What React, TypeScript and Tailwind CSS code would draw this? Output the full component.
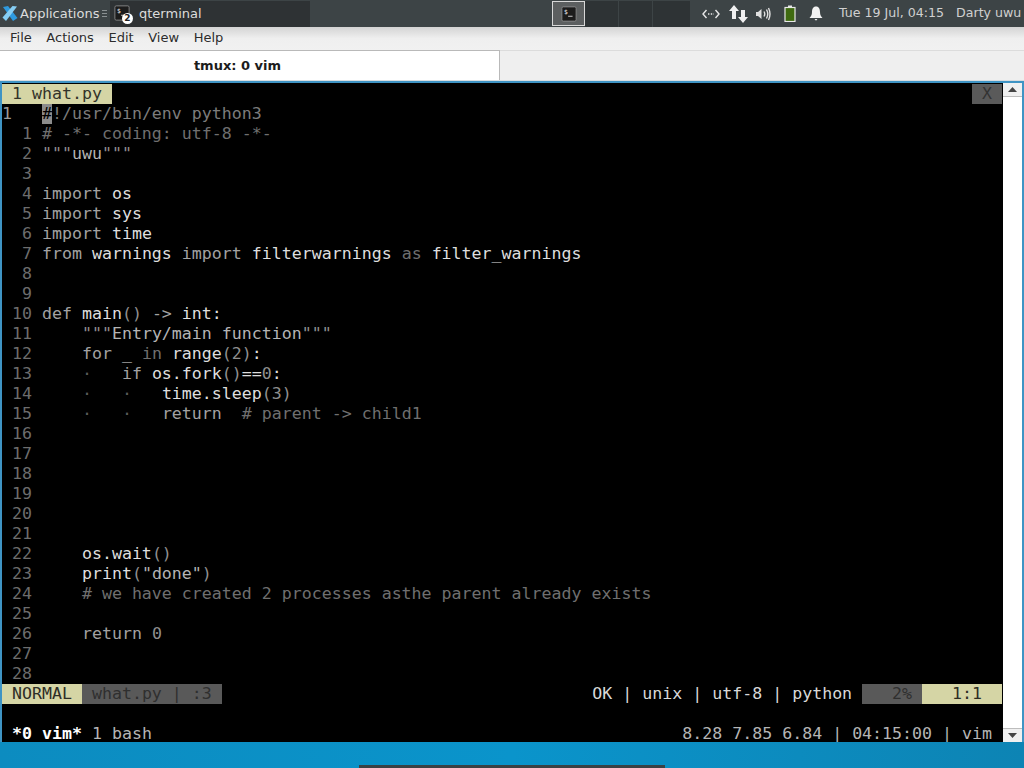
import React from "react";

type Seg = [string, string];
const W = "text-[#dedede]";
const K = "text-[#a2a2a2]";
const C = "text-[#6f6f6f]";
const S = "text-[#b4b4b4]";
const D = "text-[#5a5a5a]";
const M = "text-[#8f8f8f]";

const code: Seg[][] = [
  [["# -*- coding: utf-8 -*-", C]],
  [['"""', M], ["uwu", S], ['"""', M]],
  [],
  [["import", K], [" os", W]],
  [["import", K], [" sys", W]],
  [["import", K], [" time", W]],
  [["from", K], [" warnings ", W], ["import", K], [" filterwarnings ", W], ["as", C], [" filter_warnings", W]],
  [],
  [],
  [["def", K], [" main", W], ["()", M], [" -> ", K], ["int", W], [":", W]],
  [["    ", W], ['"""', M], ["Entry/main function", S], ['"""', M]],
  [["    ", W], ["for", K], [" _ ", W], ["in", C], [" range", W], ["(2)", M], [":", W]],
  [["    ", W], ["·   ", D], ["if", K], [" os.fork", W], ["()", M], ["==", W], ["0", M], [":", W]],
  [["    ", W], ["·   ·   ", D], ["time.sleep", W], ["(3)", M]],
  [["    ", W], ["·   ·   ", D], ["return", K], ["  # parent -> child1", C]],
  [], [], [], [], [], [],
  [["    os.wait", W], ["()", M]],
  [["    print", W], ["(", M], ['"done"', S], [")", M]],
  [["    # we have created 2 processes asthe parent already exists", C]],
  [],
  [["    ", W], ["return", K], [" 0", M]],
  [],
  [],
];

function Row({ children, className = "" }: { children?: React.ReactNode; className?: string }) {
  return <div className={`flex h-5 shrink-0 items-center whitespace-pre leading-5 ${className}`}>{children}</div>;
}

function TermIcon({ size = 18 }: { size?: number }) {
  return (
    <svg width={size} height={size} viewBox="0 0 18 18">
      <rect x="1" y="1" width="16" height="16" rx="1.5" fill="#1c1c1c" stroke="#8a8a8a" />
      <text x="3.5" y="8.5" fontSize="7" fill="#eee" fontFamily="DejaVu Sans Mono">$</text>
      <rect x="8" y="11" width="5" height="1" fill="#ddd" />
    </svg>
  );
}

export default function App() {
  return (
    <div className="flex h-[768px] w-[1024px] flex-col overflow-hidden bg-[#0f8fc2] font-['DejaVu_Sans',sans-serif] text-[13px]">
      {/* top panel */}
      <div className="flex h-[27px] shrink-0 items-center bg-[#3d4446] text-[#dcdcdc]">
        <div className="flex w-[110px] shrink-0 items-center pl-[2px]">
          <svg width="16" height="17" viewBox="0 0 16 17" className="shrink-0">
            <path d="M1 2 L6 1 L15.5 13 L11 16 Z" fill="#2f9ade" />
            <path d="M15 1.5 L10.5 1 L0.5 12.5 L4 16 Z" fill="#86cdf3" />
          </svg>
          <span className="ml-[2px]">Applications</span>
          <span className="ml-[3px] flex flex-col gap-[2px]">
            <span className="block h-px w-[5px] bg-[#8a9092]" />
            <span className="block h-px w-[5px] bg-[#8a9092]" />
            <span className="block h-px w-[5px] bg-[#8a9092]" />
          </span>
        </div>
        <div className="flex h-[26px] w-[200px] shrink-0 items-center bg-[#2e3234] pl-1">
          <div className="relative h-[18px] w-[18px]">
            <TermIcon size={16} />
            <span className="absolute left-[8px] top-[8px] flex h-[11px] w-[11px] items-center justify-center rounded-full bg-white text-[9px] font-bold leading-none text-[#222]">2</span>
          </div>
          <span className="ml-[7px]">qterminal</span>
        </div>
        <div className="w-[242px] shrink-0" />
        <div className="flex h-[25px] w-[33px] shrink-0 items-center justify-center border border-[#d8d8d8] bg-[#5c5f60]">
          <TermIcon size={16} />
        </div>
        <div className="flex h-[26px] w-[105px] shrink-0 bg-[#2e3335]">
          <div className="w-[34px] border-r border-[#3d4446]" />
          <div className="w-[34px] border-r border-[#3d4446]" />
          <div className="w-[37px]" />
        </div>
        <div className="flex min-w-0 flex-1 items-center">
          <svg width="18" height="12" viewBox="0 0 18 12" className="ml-[12px] shrink-0" fill="none" stroke="#e8e8e8" strokeWidth="1.4">
            <path d="M4.5 2 L1 6 L4.5 10 M13.5 2 L17 6 L13.5 10" />
            <path d="M6 6 H12" strokeDasharray="1.4 1.4" />
          </svg>
          <svg width="20" height="20" viewBox="0 0 20 20" className="ml-[8px] shrink-0" fill="#f0f0f0">
            <path d="M6 1 L11 7 H8 V15 H4 V7 H1 Z" />
            <path d="M15 19 L10 13 H13 V6 H17 V13 H20 Z" />
          </svg>
          <svg width="16" height="14" viewBox="0 0 16 14" className="ml-[7px] shrink-0" fill="none" stroke="#e0e0e0" strokeWidth="1.4">
            <path d="M1 5 H3 L6.5 2 V12 L3 9 H1 Z" fill="#e0e0e0" stroke="none" />
            <path d="M9 4.5 Q10.5 7 9 9.5 M11.5 2.5 Q14 7 11.5 11.5 M13.5 1 Q16.5 7 13.5 13" />
          </svg>
          <svg width="12" height="17" viewBox="0 0 12 17" className="ml-[13px] shrink-0">
            <rect x="4" y="0.5" width="4" height="2" fill="#e8e8e8" />
            <rect x="1" y="2.5" width="10" height="14" fill="#3f6a10" stroke="#e8e8e8" strokeWidth="1.2" />
          </svg>
          <svg width="14" height="15" viewBox="0 0 14 15" className="ml-[13px] shrink-0" fill="#f2f2f2">
            <path d="M7 0.5 C10 0.5 11 3 11 6 C11 9 12 10.5 13.5 12 H0.5 C2 10.5 3 9 3 6 C3 3 4 0.5 7 0.5 Z" />
            <path d="M5.5 13 H8.5 L7 14.8 Z" />
          </svg>
          <span className="ml-[16px] whitespace-pre text-[12.6px] text-[#d0d0d0]">Tue 19 Jul, 04:15</span>
          <span className="ml-[12px] whitespace-pre text-[12.6px] text-[#d0d0d0]">Darty uwu</span>
        </div>
      </div>

      {/* menu bar */}
      <div className="flex h-[23px] shrink-0 items-center gap-[14.6px] bg-gradient-to-b from-[#d4d4d4] via-[#efefef] to-[#f1f1f1] pb-[2px] pl-[10px] text-[#2c2c2c]">
        <span>File</span>
        <span>Actions</span>
        <span>Edit</span>
        <span>View</span>
        <span>Help</span>
      </div>

      {/* tabs */}
      <div className="flex h-[31px] shrink-0 border-b border-[#d8dde0] bg-[#efefef]">
        <div className="flex w-[500px] items-center justify-center border-r border-t border-[#b9b9b9] bg-white pr-[24px] font-bold text-[#1c1c1c]">
          tmux: 0 vim
        </div>
        <div className="flex-1 border-t border-[#dcdcdc]" />
      </div>

      {/* terminal */}
      <div className="flex h-[661px] shrink-0 overflow-hidden border-x-2 border-t-2 border-[#3f94c4] bg-black">
        <div className="flex w-[1001px] shrink-0 flex-col overflow-hidden pr-px pt-px font-['DejaVu_Sans_Mono',monospace] text-[16.6px]">
          <Row className="justify-between">
            <span className="bg-[#d5d5a5] text-[#33332a]"> 1 what.py </span>
            <span className="bg-[#5a5a5a] text-[#333333]"> X </span>
          </Row>
          <Row className="text-[#7c7c7c]">
            <span className="text-[#9a9a9a]">1   </span>
            <span className="bg-[#8c8c8c] text-black">#</span>
            <span>!/usr/bin/env python3</span>
          </Row>
          {code.map((line, i) => (
            <Row key={i}>
              <span className="text-[#6d6d6d]">{String(i + 1).padStart(3, " ") + " "}</span>
              {line.map((s, j) => (
                <span key={j} className={s[1]}>{s[0]}</span>
              ))}
            </Row>
          ))}
          <Row className="justify-between">
            <div className="flex">
              <span className="bg-[#d5d5a5] text-[#2e2e26]"> NORMAL </span>
              <span className="bg-[#595959] text-[#2f2f2f]"> what.py | :3 </span>
            </div>
            <div className="flex">
              <span className="text-[#d8d8d8]">OK | unix | utf-8 | python </span>
              <span className="bg-[#595959] text-[#2f2f2f]">   2% </span>
              <span className="bg-[#d5d5a5] text-[#2e2e26]">   1:1  </span>
            </div>
          </Row>
          <Row />
          <Row className="justify-between">
            <div>
              <span> </span>
              <span className="font-bold text-white">*0 vim*</span>
              <span className="text-[#b5b5b5]"> 1 bash</span>
            </div>
            <span className="text-[#b5b5b5]">8.28 7.85 6.84 | 04:15:00 | vim </span>
          </Row>
        </div>
        {/* scrollbar */}
        <div className="flex flex-1 flex-col bg-[#f4f4f4]">
          <div className="flex h-[14px] items-center justify-center border-b border-[#bdbdbd] bg-[#f0f0f0]">
            <svg width="9" height="5" viewBox="0 0 9 5"><path d="M0 5 L4.5 0 L9 5 Z" fill="#444" /></svg>
          </div>
          <div className="flex-1 bg-white" />
          <div className="flex h-[14px] items-center justify-center border-t border-[#bdbdbd] bg-[#f0f0f0]">
            <svg width="9" height="5" viewBox="0 0 9 5"><path d="M0 0 L4.5 5 L9 0 Z" fill="#444" /></svg>
          </div>
        </div>
      </div>

      {/* desktop */}
      <div className="flex flex-1 items-end bg-gradient-to-r from-[#0c8cc0] via-[#0a94cb] to-[#0d84b4]">
        <div className="ml-[359px] h-[3px] w-[306px] bg-[#3a4144]" />
      </div>
    </div>
  );
}
